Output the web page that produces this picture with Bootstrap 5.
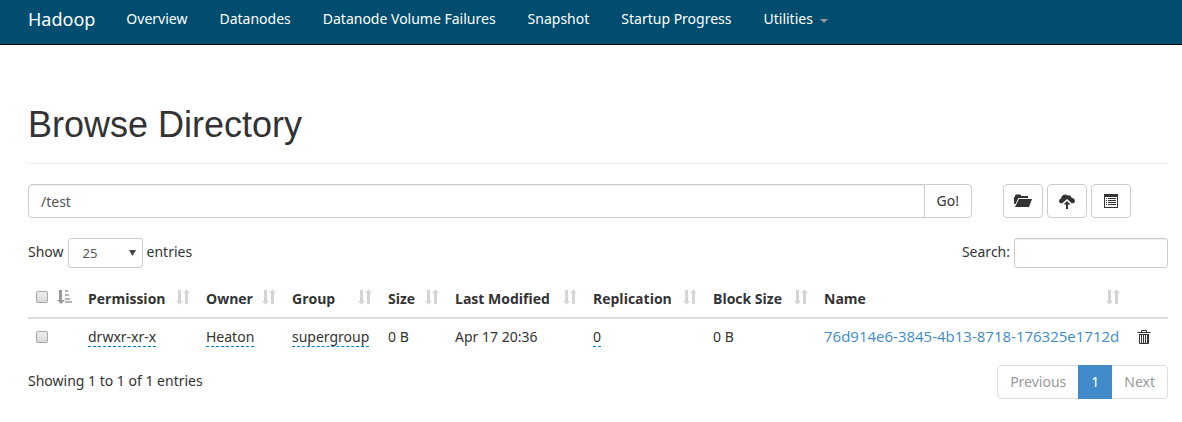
<!DOCTYPE html>
<html lang="en">
<head>
<meta charset="utf-8">
<meta name="viewport" content="width=device-width, initial-scale=1">
<title>Browsing HDFS</title>
<link href="https://cdn.jsdelivr.net/npm/bootstrap@5.3.0/dist/css/bootstrap.min.css" rel="stylesheet">
<style>
  body { font-family: "Noto Sans", "Open Sans", sans-serif; font-size: 14px; line-height: 20px; color: #333; }
  .page-gutter { padding-left: 28px; padding-right: 14px; }
  .topbar { background: #014d70; border-bottom: 1px solid #090909; height: 45px; padding-top: 0; padding-bottom: 0; }
  .topbar .navbar-brand { color: #fff; font-size: 18px; line-height: 20px; padding: 0 0 6px; margin-right: 15px; }
  .topbar .navbar-nav .nav-link { color: #fff; padding: 0 16px 6px; line-height: 20px; white-space: nowrap; }
  .topbar .dropdown-toggle::after { color: #999; border-top-width: 4px; border-left-width: 4px; border-right-width: 4px; margin-left: 7px; vertical-align: 1px; }
  h1 { font-family: "Liberation Sans", Arial, sans-serif; font-size: 36px; line-height: 40px; font-weight: 400; padding-bottom: 18px; border-bottom: 1px solid #eee; margin: 60px 0 20px; }
  .form-control, .form-select, .btn { font-size: 14px; line-height: 20px; border-color: #ccc; border-radius: 4px; color: #555; }
  .form-control { box-shadow: inset 0 1px 1px rgba(0,0,0,.075); }
  .path-group { flex: 1 1 0; }
  .path-group .form-control { padding: 7px 12px 5px; }
  .btn { color: #333; padding: 6px 12px; height: 34px; background: #fff; }
  .tools { margin-left: 31px; margin-right: 37px; gap: 4px; }
  .tools .btn { width: 40px; padding: 0; display: flex; align-items: center; justify-content: center; }
  .len-select { width: 75px; height: 30px; font-size: 13px; padding: 4px 14px; border-radius: 3px;
    background-image: url("data:image/svg+xml,%3Csvg xmlns='http://www.w3.org/2000/svg' viewBox='0 0 7 6'%3E%3Cpath d='M0 0h7L3.500 6z' fill='%23444'/%3E%3C/svg%3E");
    background-size: 7px 6px; background-position: right 6px center; }
  .find-box { width: 154px; height: 30px; border-radius: 3px; }
  .files { table-layout: fixed; margin: 9px 0 10px; color: #333; --bs-table-color: #333; }
  .files > :not(caption) > * > * { padding: 7px 8px 8px; border: 0; white-space: nowrap; }
  .files > thead > tr > th { font-family: "Open Sans", sans-serif; border-bottom: 2px solid #ddd; padding: 12px 8px 8px; }
  .files th > div { min-height: 20px; }
  .files th svg { color: #d5d5d5; flex: none; }
  .files .form-check-input { width: 12px; height: 12px; margin: 0; border: 1px solid #a6a6a6; border-radius: 2px; background: linear-gradient(#eee, #d9d9d9); flex: none; display: block; }
  .files th .form-check-input { margin-top: 2px; }
  .files a { color: #428bca; text-decoration: none; }
  .files a.file-name { font-family: "Open Sans", sans-serif; font-size: 15px; }
  .files a.editable { color: #333; border-bottom: 1px dashed #0088cc; display: inline-block; line-height: 19px; }
  .trash-btn { border: 0; background: none; padding: 0; color: #333; display: block; margin-left: 1px; }
  .c-check { width: 52px; } .c-perm { width: 118px; } .c-owner { width: 86px; } .c-group { width: 96px; }
  .c-size { width: 67px; } .c-mod { width: 138px; } .c-repl { width: 120px; } .c-block { width: 111px; } .c-del { width: 40px; }
  .entry-info { padding-top: 6px; }
  .pagination { --bs-pagination-border-color: #ddd; --bs-pagination-font-size: 14px; --bs-pagination-padding-x: 12px; --bs-pagination-padding-y: 6px; --bs-pagination-disabled-color: #999; --bs-pagination-disabled-bg: #fff; --bs-pagination-disabled-border-color: #ddd; --bs-pagination-active-bg: #428bca; --bs-pagination-active-border-color: #428bca; --bs-pagination-border-radius: 4px; }
</style>
</head>
<body>
<svg class="d-none" aria-hidden="true">
  <symbol id="i-sort" viewBox="0 0 14 16"><path fill="currentColor" d="M2 1h3v11h2l-3.500 3.500L0 12h2zM9 15h3V4h2L10.500 .5 7 4h2z"/></symbol>
  <symbol id="i-asc" viewBox="0 0 15 16"><path fill="currentColor" d="M2 1h3v10h3L4 15 0 11h2z"/><path fill="currentColor" opacity=".75" d="M8 1h3v2H8zM8 5h4v2H8zM8 9h5v2H8zM8 12h7v2H8z"/></symbol>
</svg>
<nav class="navbar navbar-expand topbar page-gutter">
  <a class="navbar-brand" href="#">Hadoop</a>
  <ul class="navbar-nav">
    <li class="nav-item"><a class="nav-link" href="#">Overview</a></li>
    <li class="nav-item"><a class="nav-link" href="#">Datanodes</a></li>
    <li class="nav-item"><a class="nav-link" href="#">Datanode Volume Failures</a></li>
    <li class="nav-item"><a class="nav-link" href="#">Snapshot</a></li>
    <li class="nav-item"><a class="nav-link" href="#">Startup Progress</a></li>
    <li class="nav-item dropdown"><a class="nav-link dropdown-toggle" href="#" role="button" data-bs-toggle="dropdown">Utilities</a></li>
  </ul>
</nav>
<main class="page-gutter">
  <h1>Browse Directory</h1>
  <div class="d-flex">
    <div class="input-group path-group">
      <input type="text" class="form-control" value="/test" aria-label="Directory">
      <button type="button" class="btn">Go!</button>
    </div>
    <div class="d-flex tools">
      <button type="button" class="btn" aria-label="Create directory"><svg width="18" height="14" viewBox="0 0 18 14" fill="#333"><path d="M0 10V3h1V1.500L2 .5h4l1.500 1.500H14V4H4.500L1.500 10z"/><path d="M5 5h13l-3 8H1z"/></svg></button>
      <button type="button" class="btn" aria-label="Upload files"><svg width="16" height="15" viewBox="0 0 16 15" fill="#333"><path d="M1 9A2.600 2.600 0 0 1 2 4.500 4 4 0 0 1 8.500 1.500 3.200 3.200 0 0 1 12.700 4 2.800 2.800 0 0 1 15 8.800L13 9.500 8 5 3 9.500z"/><path d="M8 7l3.500 3.500H9V15H7v-4.500H4.500z"/></svg></button>
      <button type="button" class="btn" aria-label="Cut and paste"><svg width="14" height="16" viewBox="0 0 14 16" fill="#333"><path fill-rule="evenodd" d="M0 1h14v14H0zM1 4v10h12V4z"/><path d="M2 5h1v1H2zM4 5h8v1H4zM2 7h1v1H2zM4 7h8v1H4zM2 9h1v1H2zM4 9h8v1H4zM2 11h1v1H2zM4 11h8v1H4z"/></svg></button>
    </div>
  </div>
  <div class="d-flex justify-content-between mt-3 pt-1">
    <div class="d-flex">
      <label class="pt-1 me-1" for="len">Show</label>
      <select id="len" class="form-select len-select"><option>25</option></select>
      <label class="pt-1 ms-1" for="len">entries</label>
    </div>
    <div class="d-flex">
      <label class="pt-1 me-1" for="find">Search:</label>
      <input id="find" type="search" class="form-control find-box">
    </div>
  </div>
  <table class="table files">
    <colgroup><col class="c-check"><col class="c-perm"><col class="c-owner"><col class="c-group"><col class="c-size"><col class="c-mod"><col class="c-repl"><col class="c-block"><col><col class="c-del"></colgroup>
    <thead>
      <tr>
        <th><div class="d-flex justify-content-between align-items-start"><input class="form-check-input" type="checkbox" aria-label="Select all"><svg width="15" height="16" style="color:#999"><use href="#i-asc"/></svg></div></th>
        <th><div class="d-flex justify-content-between">Permission<svg width="14" height="16"><use href="#i-sort"/></svg></div></th>
        <th><div class="d-flex justify-content-between">Owner<svg width="14" height="16"><use href="#i-sort"/></svg></div></th>
        <th><div class="d-flex justify-content-between">Group<svg width="14" height="16"><use href="#i-sort"/></svg></div></th>
        <th><div class="d-flex justify-content-between">Size<svg width="14" height="16"><use href="#i-sort"/></svg></div></th>
        <th><div class="d-flex justify-content-between">Last Modified<svg width="14" height="16"><use href="#i-sort"/></svg></div></th>
        <th><div class="d-flex justify-content-between">Replication<svg width="14" height="16"><use href="#i-sort"/></svg></div></th>
        <th><div class="d-flex justify-content-between">Block Size<svg width="14" height="16"><use href="#i-sort"/></svg></div></th>
        <th><div class="d-flex justify-content-between">Name<svg width="14" height="16"><use href="#i-sort"/></svg></div></th>
        <th></th>
      </tr>
    </thead>
    <tbody>
      <tr class="align-middle">
        <td><input class="form-check-input" type="checkbox" aria-label="Select row"></td>
        <td><a class="editable" href="#">drwxr-xr-x</a></td>
        <td><a class="editable" href="#">Heaton</a></td>
        <td><a class="editable" href="#">supergroup</a></td>
        <td>0 B</td>
        <td>Apr 17 20:36</td>
        <td><a class="editable" href="#">0</a></td>
        <td>0 B</td>
        <td><a class="file-name" href="#">76d914e6-3845-4b13-8718-176325e1712d</a></td>
        <td><button type="button" class="trash-btn" aria-label="Delete"><svg class="d-block" width="14" height="16" viewBox="0 0 14 16" fill="none" stroke="#333"><path d="M.5 3.500h13M4.500 3V1.500h5V3M2.500 5v9.500h9V5M2 5.500h10M4.500 6v8M6.500 6v8M8.500 6v8M10.500 6v8"/></svg></button></td>
      </tr>
    </tbody>
  </table>
  <div class="d-flex justify-content-between">
    <div class="entry-info">Showing 1 to 1 of 1 entries</div>
    <ul class="pagination mb-4">
      <li class="page-item disabled"><a class="page-link" href="#">Previous</a></li>
      <li class="page-item active"><a class="page-link" href="#">1</a></li>
      <li class="page-item disabled"><a class="page-link" href="#">Next</a></li>
    </ul>
  </div>
</main>
<script src="https://cdn.jsdelivr.net/npm/bootstrap@5.3.0/dist/js/bootstrap.bundle.min.js"></script>
</body>
</html>
